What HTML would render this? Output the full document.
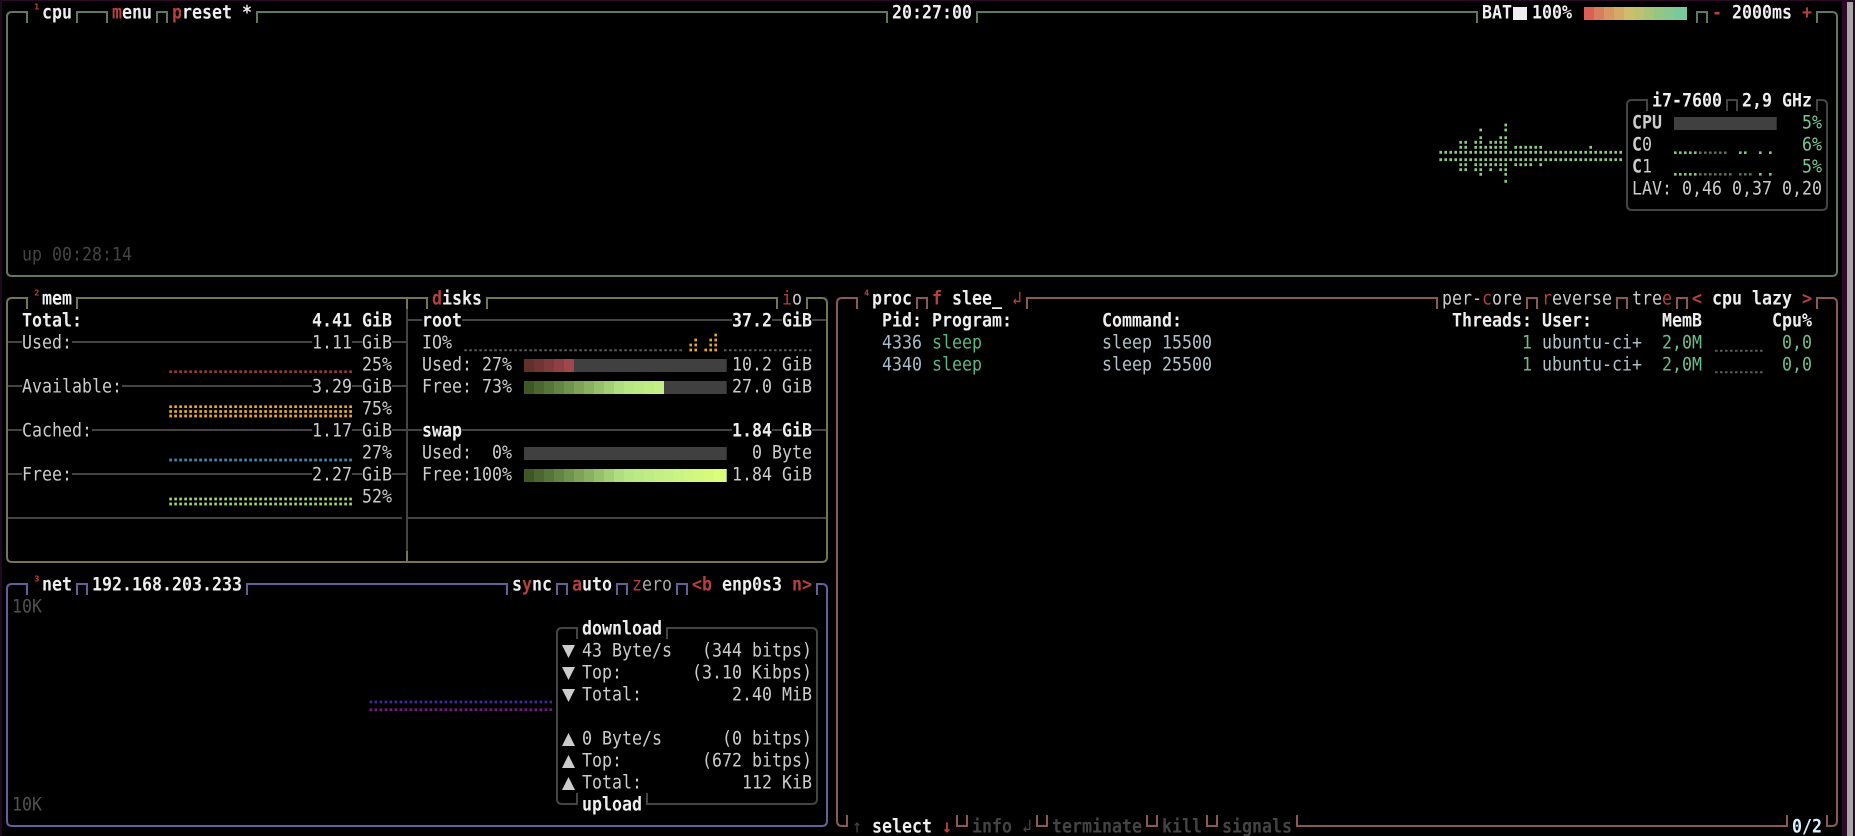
<!DOCTYPE html>
<html lang="en">
<head>
<meta charset="utf-8">
<title>btop</title>
<style>
html,body{margin:0;padding:0;background:#000;width:1855px;height:836px;overflow:hidden}
#s{position:absolute;left:0;top:0;width:1855px;height:836px;background:#000;overflow:hidden}
svg{position:absolute;left:0;top:0}
.r{position:absolute;left:0;width:1855px;height:22px;line-height:22px;font-family:"DejaVu Sans Mono","Liberation Mono",monospace;font-size:16.61px;color:#ccc;white-space:pre;transform:translateY(1px) scaleY(1.13);transform-origin:50% 50%}
.r span{position:absolute;top:0}
.b{font-weight:bold;color:#eee}
.h{font-weight:bold;color:#b54040}
.n{color:#b54040}
.d{color:#444}
.db{color:#444;font-weight:bold}
.g{color:#77ca9b}
.m{color:#6cbd8e}
.p{color:#5bb585}
.u{color:#b0c2ca}
.i{color:#a8bcc8}
.sup{font-size:12.5px;font-weight:bold;color:#c04040;line-height:15px}
.x{position:absolute}
</style>
</head>
<body>
<div id="s">
<!-- window chrome -->
<div class="x" style="left:0;top:0;width:1855px;height:1px;background:#2c0a26"></div>
<div class="x" style="left:0;top:0;width:2px;height:836px;background:#1e0a1c"></div>
<div class="x" style="left:1842px;top:0;width:13px;height:836px;background:#2c0a26"></div>
<div class="x" style="left:1847px;top:2px;width:6px;height:834px;background:#a9a5a9"></div>

<svg width="1855" height="836" viewBox="0 0 1855 836" fill="none" stroke-width="2">
<!-- cpu box -->
<path stroke="#5f7862" d="M27 23V12H12Q7 12 7 17V271Q7 276 12 276H1832Q1837 276 1837 271V17Q1837 12 1832 12H1817V23M77 23V12H107V23M157 23V12H167V23M257 23V12H887V23M977 23V12H1477V23M1697 23V12H1707V23"/>
<!-- mem/disks box -->
<path stroke="#75754f" d="M27 309V298H12Q7 298 7 303V557Q7 562 12 562H822Q827 562 827 557V303Q827 298 822 298H807V309M77 309V298H427V309M487 309V298H777V309M407 298V309M407 551V562"/>
<!-- net box -->
<path stroke="#635f98" d="M27 595V584H12Q7 584 7 589V821Q7 826 12 826H822Q827 826 827 821V589Q827 584 822 584H817V595M77 595V584H87V595M247 595V584H507V595M557 595V584H567V595M617 595V584H627V595M677 595V584H687V595"/>
<!-- proc box -->
<path stroke="#8a5858" d="M857 309V298H842Q837 298 837 303V821Q837 826 842 826H847V815M1817 309V298H1832Q1837 298 1837 303V821Q1837 826 1832 826H1827V815M917 309V298H927V309M1027 309V298H1437V309M1527 309V298H1537V309M1617 309V298H1627V309M1677 309V298H1687V309M957 815V826H967V815M1037 815V826H1047V815M1147 815V826H1157V815M1207 815V826H1217V815M1297 815V826H1787V815"/>
<!-- inner boxes and dividers -->
<path stroke="#444" d="M1647 111V100H1632Q1627 100 1627 105V205Q1627 210 1632 210H1822Q1827 210 1827 205V105Q1827 100 1822 100H1817V111M1727 111V100H1737V111"/>
<path stroke="#444" d="M577 639V628H562Q557 628 557 633V799Q557 804 562 804H577V793M647 793V804H812Q817 804 817 799V633Q817 628 812 628H667V639"/>
<path stroke="#444" d="M407 309V551M8 342H22M72 342H312M352 342H362M392 342H406M8 386H22M122 386H312M352 386H362M392 386H406M8 430H22M92 430H312M352 430H362M392 430H406M8 474H22M72 474H312M352 474H362M392 474H406M8 518H402M408 518H826M408 320H422M462 320H732M772 320H782M812 320H826M408 430H422M462 430H732M772 430H782M812 430H826"/>

<!-- cpu graph dots -->
<path stroke="#8ccb82" stroke-width="2.8" stroke-dasharray="2.6 2.4" d="M1439.4 152.3H1623M1439.4 159.7H1623M1459.4 147.3h7.6M1474.4 147.3h32.6M1514.4 147.3h27.6M1589.4 147.3h2.6M1459.4 142.3h7.6M1474.4 142.3h7.6M1489.4 142.3h17.6M1479.4 137.7h2.6M1499.4 137.7h7.6M1479.4 130h2.6M1504.4 130h2.6M1504.4 125h2.6M1459.4 164.7h7.6M1474.4 164.7h32.6M1514.4 164.7h17.6M1539.4 164.7h2.6M1459.4 169.7h7.6M1474.4 169.7h7.6M1489.4 169.7h2.6M1499.4 169.7h7.6M1479.4 174.3h2.6M1504.4 174.3h2.6M1504.4 181.3h2.6"/>
<!-- core mini graphs -->
<path stroke="#85c488" stroke-width="2.6" stroke-dasharray="2.6 2.4" d="M1674 152.7h26M1739 152.7h8M1759 152.7h4M1769 152.7h4M1674 174.3h23M1759 174.3h4M1769 174.3h4"/>
<path stroke="#58785e" stroke-width="2.4" stroke-dasharray="2.6 2.4" d="M1699 152.7h28M1699 174.3h34M1739 174.3h13"/>
<!-- memory meters -->
<g stroke-width="2.7" stroke-dasharray="2.6 2.4">
<path stroke="#a23a3a" d="M169.3 371.7H353"/>
<path stroke="#f0b020" d="M169.3 406.7H353M169.3 411.5H353M169.3 416H353"/>
<path stroke="#3f8fb5" d="M169.3 460H353"/>
<path stroke="#a6dc68" d="M169.3 499H353M169.3 504H353"/>
<!-- IO graph -->
<path stroke="#5a5a5a" stroke-width="2" d="M464.3 350.3H684M724 350.3H813"/>
<path stroke="#e8a820" d="M714.4 335h2.6M694.4 340h2.6M709.4 340h7.6M689.4 345h7.6M709.4 345h7.6M689.4 350h7.6M704.4 350h12.6"/>
<!-- net graph -->
<path stroke="#3c2ca0" d="M369.6 702H552"/>
<path stroke="#7a1a88" d="M369.6 709.7H552"/>
<!-- proc mini graphs -->
<path stroke="#5a5a5a" stroke-width="2" d="M1715 350.7H1763M1715 372.3H1763"/>
</g>

<g stroke="none">
<!-- battery -->
<rect x="1513" y="7" width="14" height="13" fill="#eee"/>
<rect x="1584" y="7" width="103" height="13" fill="#78ca9b"/>
<rect x="1584" y="7" width="10" height="13" fill="#dc5f55"/>
<rect x="1594" y="7" width="10" height="13" fill="#da7d5f"/>
<rect x="1604" y="7" width="10" height="13" fill="#d79662"/>
<rect x="1614" y="7" width="10" height="13" fill="#d4aa69"/>
<rect x="1624" y="7" width="10" height="13" fill="#cdbe6c"/>
<rect x="1634" y="7" width="10" height="13" fill="#bec170"/>
<rect x="1644" y="7" width="10" height="13" fill="#aac378"/>
<rect x="1654" y="7" width="10" height="13" fill="#96c682"/>
<rect x="1664" y="7" width="10" height="13" fill="#87c891"/>
<!-- cpu bar -->
<rect x="1674" y="117" width="102.7" height="13" fill="#404040"/>
<!-- disk bars -->
<rect x="524" y="359" width="202.7" height="13" fill="#404040"/>
<rect x="524" y="381" width="202.7" height="13" fill="#404040"/>
<rect x="524" y="447" width="202.7" height="13" fill="#404040"/>
<rect x="524" y="469" width="202.7" height="13" fill="#404040"/>
<g transform="translate(524 359)">
<rect x="0" width="10" height="13" fill="#622f2c"/><rect x="10" width="10" height="13" fill="#703533"/><rect x="20" width="10" height="13" fill="#7f3b3c"/><rect x="30" width="10" height="13" fill="#8e4144"/><rect x="40" width="10" height="13" fill="#9f474c"/>
</g>
<g transform="translate(524 381)">
<rect x="0" width="10" height="13" fill="#3e5726"/><rect x="10" width="10" height="13" fill="#4b6630"/><rect x="20" width="10" height="13" fill="#57753a"/><rect x="30" width="10" height="13" fill="#648444"/><rect x="40" width="10" height="13" fill="#70934e"/><rect x="50" width="10" height="13" fill="#7da258"/><rect x="60" width="10" height="13" fill="#89b162"/><rect x="70" width="10" height="13" fill="#96c06c"/><rect x="80" width="10" height="13" fill="#a2cf76"/><rect x="90" width="10" height="13" fill="#afde80"/><rect x="100" width="10" height="13" fill="#b7e785"/><rect x="110" width="10" height="13" fill="#bbea85"/><rect x="120" width="10" height="13" fill="#bfec85"/><rect x="130" width="10" height="13" fill="#c3ef85"/>
</g>
<g transform="translate(524 469)">
<rect x="0" width="10" height="13" fill="#3e5726"/><rect x="10" width="10" height="13" fill="#4b6630"/><rect x="20" width="10" height="13" fill="#57753a"/><rect x="30" width="10" height="13" fill="#648444"/><rect x="40" width="10" height="13" fill="#70934e"/><rect x="50" width="10" height="13" fill="#7da258"/><rect x="60" width="10" height="13" fill="#89b162"/><rect x="70" width="10" height="13" fill="#96c06c"/><rect x="80" width="10" height="13" fill="#a2cf76"/><rect x="90" width="10" height="13" fill="#afde80"/><rect x="100" width="10" height="13" fill="#b7e785"/><rect x="110" width="10" height="13" fill="#bbea85"/><rect x="120" width="10" height="13" fill="#bfec85"/><rect x="130" width="10" height="13" fill="#c3ef85"/><rect x="140" width="10" height="13" fill="#c7f185"/><rect x="150" width="10" height="13" fill="#caf485"/><rect x="160" width="10" height="13" fill="#cef680"/><rect x="170" width="10" height="13" fill="#d2f97e"/><rect x="180" width="10" height="13" fill="#d6fb7c"/><rect x="190" width="12.7" height="13" fill="#dafe7a"/>
</g>
<!-- net triangles -->
<g fill="#ccc">
<polygon points="562,645 575,645 568.5,658"/>
<polygon points="562,667 575,667 568.5,680"/>
<polygon points="562,689 575,689 568.5,702"/>
<polygon points="562,746 575,746 568.5,733"/>
<polygon points="562,768 575,768 568.5,755"/>
<polygon points="562,790 575,790 568.5,777"/>
</g>
</g>
</svg>

<!-- row 0 -->
<div class="r" style="top:1px">
<span class="sup" style="left:33px">¹</span><span class="b" style="left:42px">cpu</span>
<span class="h" style="left:112px">m</span><span class="b" style="left:122px">enu</span>
<span class="h" style="left:172px">p</span><span class="b" style="left:182px">reset *</span>
<span class="b" style="left:892px">20:27:00</span>
<span class="b" style="left:1482px">BAT</span>
<span class="b" style="left:1532px">100%</span>
<span class="h" style="left:1712px">-</span><span class="b" style="left:1732px">2000ms</span><span class="h" style="left:1802px">+</span>
</div>
<div class="r" style="top:89px">
<span class="b" style="left:1652px">i7-7600</span><span class="b" style="left:1742px">2,9 GHz</span>
</div>
<div class="r" style="top:111px"><span class="b" style="left:1632px;color:#ccc">CPU</span><span class="g" style="left:1802px">5%</span></div>
<div class="r" style="top:133px"><span class="b" style="left:1632px;color:#ccc">C</span><span style="left:1642px">0</span><span class="g" style="left:1802px">6%</span></div>
<div class="r" style="top:155px"><span class="b" style="left:1632px;color:#ccc">C</span><span style="left:1642px">1</span><span class="g" style="left:1802px">5%</span></div>
<div class="r" style="top:177px"><span style="left:1632px">LAV: 0,46 0,37 0,20</span></div>
<div class="r" style="top:243px"><span class="d" style="left:22px">up 00:28:14</span></div>

<!-- row 13 -->
<div class="r" style="top:287px">
<span class="sup" style="left:33px">²</span><span class="b" style="left:42px">mem</span>
<span class="h" style="left:432px">d</span><span class="b" style="left:442px">isks</span>
<span class="n" style="left:782px">i</span><span style="left:792px">o</span>
<span class="sup" style="left:863px">⁴</span><span class="b" style="left:872px">proc</span>
<span class="h" style="left:932px">f</span><span class="b" style="left:952px">slee_</span><span class="n" style="left:1012px">↲</span>
<span style="left:1442px">per-</span><span class="n" style="left:1482px">c</span><span style="left:1492px">ore</span>
<span class="n" style="left:1542px">r</span><span style="left:1552px">everse</span>
<span style="left:1632px">tre</span><span class="n" style="left:1662px">e</span>
<span class="h" style="left:1692px">&lt;</span><span class="b" style="left:1712px">cpu lazy</span><span class="h" style="left:1802px">&gt;</span>
</div>
<!-- row 14 -->
<div class="r" style="top:309px">
<span class="b" style="left:22px">Total:</span><span class="b" style="left:312px">4.41 GiB</span>
<span class="b" style="left:422px">root</span><span class="b" style="left:732px">37.2</span><span class="b" style="left:782px">GiB</span>
<span class="b" style="left:882px">Pid:</span><span class="b" style="left:932px">Program:</span><span class="b" style="left:1102px">Command:</span>
<span class="b" style="left:1452px">Threads:</span><span class="b" style="left:1542px">User:</span><span class="b" style="left:1662px">MemB</span><span class="b" style="left:1772px">Cpu%</span>
</div>
<!-- row 15 -->
<div class="r" style="top:331px">
<span style="left:22px">Used:</span><span style="left:312px">1.11</span><span style="left:362px">GiB</span>
<span style="left:422px">IO%</span>
<span class="i" style="left:882px">4336</span><span class="p" style="left:932px">sleep</span><span class="u" style="left:1102px">sleep 15500</span>
<span class="m" style="left:1522px">1</span><span class="u" style="left:1542px">ubuntu-ci+</span><span class="m" style="left:1662px">2,0M</span><span class="m" style="left:1782px">0,0</span>
</div>
<!-- row 16 -->
<div class="r" style="top:353px">
<span style="left:362px">25%</span>
<span style="left:422px">Used: 27%</span><span style="left:732px">10.2 GiB</span>
<span class="i" style="left:882px">4340</span><span class="p" style="left:932px">sleep</span><span class="u" style="left:1102px">sleep 25500</span>
<span class="m" style="left:1522px">1</span><span class="u" style="left:1542px">ubuntu-ci+</span><span class="m" style="left:1662px">2,0M</span><span class="m" style="left:1782px">0,0</span>
</div>
<!-- row 17 -->
<div class="r" style="top:375px">
<span style="left:22px">Available:</span><span style="left:312px">3.29</span><span style="left:362px">GiB</span>
<span style="left:422px">Free: 73%</span><span style="left:732px">27.0 GiB</span>
</div>
<div class="r" style="top:397px"><span style="left:362px">75%</span></div>
<!-- row 19 -->
<div class="r" style="top:419px">
<span style="left:22px">Cached:</span><span style="left:312px">1.17</span><span style="left:362px">GiB</span>
<span class="b" style="left:422px">swap</span><span class="b" style="left:732px">1.84</span><span class="b" style="left:782px">GiB</span>
</div>
<div class="r" style="top:441px">
<span style="left:362px">27%</span>
<span style="left:422px">Used:  0%</span><span style="left:752px">0 Byte</span>
</div>
<div class="r" style="top:463px">
<span style="left:22px">Free:</span><span style="left:312px">2.27</span><span style="left:362px">GiB</span>
<span style="left:422px">Free:100%</span><span style="left:732px">1.84 GiB</span>
</div>
<div class="r" style="top:485px"><span style="left:362px">52%</span></div>

<!-- net -->
<div class="r" style="top:573px">
<span class="sup" style="left:33px">³</span><span class="b" style="left:42px">net</span>
<span class="b" style="left:92px">192.168.203.233</span>
<span class="b" style="left:512px">s</span><span class="h" style="left:522px">y</span><span class="b" style="left:532px">nc</span>
<span class="h" style="left:572px">a</span><span class="b" style="left:582px">uto</span>
<span class="n" style="left:632px">z</span><span style="left:642px;color:#aaa">ero</span>
<span class="h" style="left:692px">&lt;b</span><span class="b" style="left:722px">enp0s3</span><span class="h" style="left:792px">n&gt;</span>
</div>
<div class="r" style="top:595px"><span style="left:12px;color:#505050">10K</span></div>
<div class="r" style="top:617px"><span class="b" style="left:582px">download</span></div>
<div class="r" style="top:639px"><span style="left:582px">43 Byte/s</span><span style="left:702px">(344 bitps)</span></div>
<div class="r" style="top:661px"><span style="left:582px">Top:</span><span style="left:692px">(3.10 Kibps)</span></div>
<div class="r" style="top:683px"><span style="left:582px">Total:</span><span style="left:732px">2.40 MiB</span></div>
<div class="r" style="top:727px"><span style="left:582px">0 Byte/s</span><span style="left:722px">(0 bitps)</span></div>
<div class="r" style="top:749px"><span style="left:582px">Top:</span><span style="left:702px">(672 bitps)</span></div>
<div class="r" style="top:771px"><span style="left:582px">Total:</span><span style="left:742px">112 KiB</span></div>
<div class="r" style="top:793px"><span style="left:12px;color:#505050">10K</span><span class="b" style="left:582px">upload</span></div>

<!-- proc bottom -->
<div class="r" style="top:815px">
<span class="d" style="left:852px">↑</span><span class="b" style="left:872px">select</span><span class="h" style="left:942px">↓</span>
<span class="db" style="left:972px">info</span><span class="d" style="left:1022px">↲</span>
<span class="db" style="left:1052px">terminate</span>
<span class="db" style="left:1162px">kill</span>
<span class="db" style="left:1222px">signals</span>
<span class="b" style="left:1792px;color:#dfeefc">0/2</span>
</div>
</div>
</body>
</html>
